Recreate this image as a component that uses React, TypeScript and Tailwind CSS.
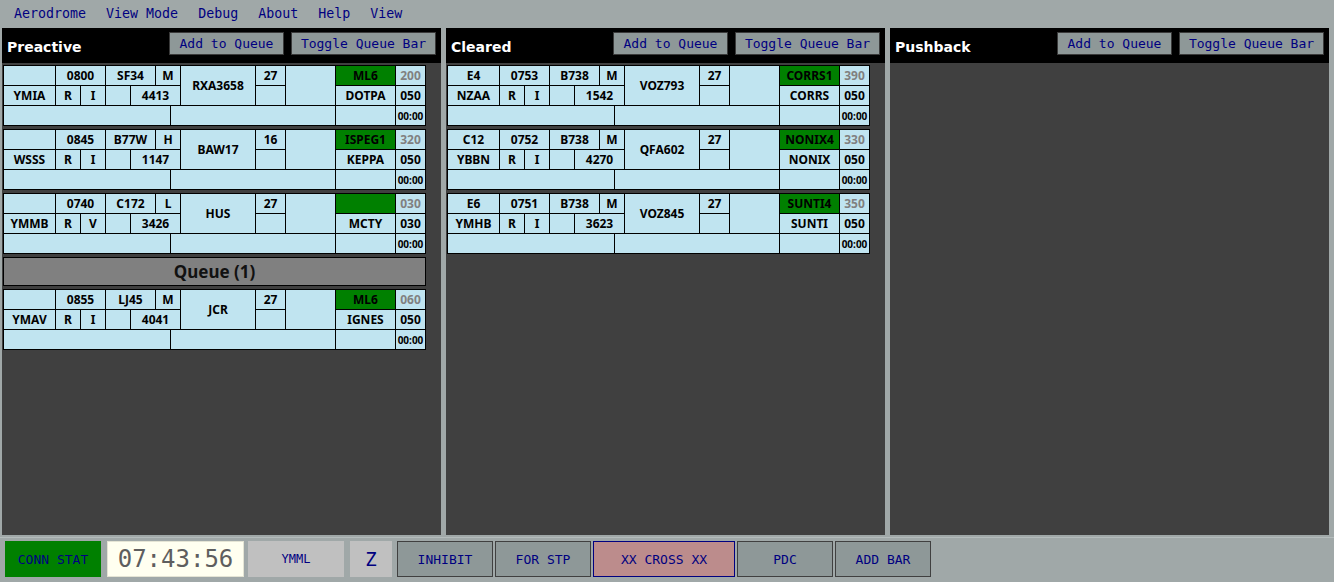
import React from "react";

type Strip = {
  bay: string;
  time: string;
  type: string;
  wtc: string;
  callsign: string;
  rwy: string;
  sid: string;
  level: string;
  dest: string;
  rules: string;
  kind: string;
  squawk: string;
  fix: string;
  cfl: string;
};

const PREACTIVE: Strip[] = [
  { bay: "", time: "0800", type: "SF34", wtc: "M", callsign: "RXA3658", rwy: "27", sid: "ML6", level: "200", dest: "YMIA", rules: "R", kind: "I", squawk: "4413", fix: "DOTPA", cfl: "050" },
  { bay: "", time: "0845", type: "B77W", wtc: "H", callsign: "BAW17", rwy: "16", sid: "ISPEG1", level: "320", dest: "WSSS", rules: "R", kind: "I", squawk: "1147", fix: "KEPPA", cfl: "050" },
  { bay: "", time: "0740", type: "C172", wtc: "L", callsign: "HUS", rwy: "27", sid: "", level: "030", dest: "YMMB", rules: "R", kind: "V", squawk: "3426", fix: "MCTY", cfl: "030" },
];

const QUEUE: Strip[] = [
  { bay: "", time: "0855", type: "LJ45", wtc: "M", callsign: "JCR", rwy: "27", sid: "ML6", level: "060", dest: "YMAV", rules: "R", kind: "I", squawk: "4041", fix: "IGNES", cfl: "050" },
];

const CLEARED: Strip[] = [
  { bay: "E4", time: "0753", type: "B738", wtc: "M", callsign: "VOZ793", rwy: "27", sid: "CORRS1", level: "390", dest: "NZAA", rules: "R", kind: "I", squawk: "1542", fix: "CORRS", cfl: "050" },
  { bay: "C12", time: "0752", type: "B738", wtc: "M", callsign: "QFA602", rwy: "27", sid: "NONIX4", level: "330", dest: "YBBN", rules: "R", kind: "I", squawk: "4270", fix: "NONIX", cfl: "050" },
  { bay: "E6", time: "0751", type: "B738", wtc: "M", callsign: "VOZ845", rwy: "27", sid: "SUNTI4", level: "350", dest: "YMHB", rules: "R", kind: "I", squawk: "3623", fix: "SUNTI", cfl: "050" },
];

const MONO = "font-['DejaVu_Sans_Mono',monospace]";

function Cell({
  children,
  className = "",
  bg = "bg-[#c0e4f0]",
  color = "text-black",
}: {
  children?: React.ReactNode;
  className?: string;
  bg?: string;
  color?: string;
}) {
  return (
    <div className={`flex items-center justify-center leading-none ${bg} ${color} ${className}`}>{children}</div>
  );
}

function StripCard({ s }: { s: Strip }) {
  return (
    <div className="grid w-[423px] shrink-0 grid-cols-[51px_24px_24px_24px_24px_14px_9px_74px_29px_49px_59px_29px] grid-rows-[19px_19px_19px] gap-px bg-black p-px font-['Noto_Sans',sans-serif] text-[12px] font-bold">
      <Cell>{s.bay}</Cell>
      <Cell className="col-span-2">{s.time}</Cell>
      <Cell className="col-span-2">{s.type}</Cell>
      <Cell className="col-span-2">{s.wtc}</Cell>
      <Cell className="row-span-2">{s.callsign}</Cell>
      <Cell>{s.rwy}</Cell>
      <Cell className="row-span-2" />
      <Cell bg="bg-[#008000]">{s.sid}</Cell>
      <Cell color="text-[#808080]">{s.level}</Cell>

      <Cell>{s.dest}</Cell>
      <Cell>{s.rules}</Cell>
      <Cell>{s.kind}</Cell>
      <Cell />
      <Cell className="col-span-3">{s.squawk}</Cell>
      <Cell />
      <Cell>{s.fix}</Cell>
      <Cell>{s.cfl}</Cell>

      <Cell className="col-span-6" />
      <Cell className="col-span-4" />
      <Cell />
      <Cell className="text-[10px]">00:00</Cell>
    </div>
  );
}

function HeaderButton({ children, width }: { children: React.ReactNode; width: string }) {
  return (
    <div
      className={`flex h-[23px] ${width} items-center justify-center border border-[#3a3a3a] bg-[#8e9898] ${MONO} text-[13px] leading-none text-[#000080]`}
    >
      {children}
    </div>
  );
}

function Column({ title, children }: { title: string; children?: React.ReactNode }) {
  return (
    <div className="flex w-[439px] shrink-0 flex-col">
      <div className="flex h-[35px] shrink-0 items-start bg-black pl-[5px] pr-[5px] pt-[4px]">
        <span className="mt-[8px] font-['DejaVu_Sans',sans-serif] text-[14px] font-bold leading-none text-white">
          {title}
        </span>
        <div className="ml-auto flex gap-[7px]">
          <HeaderButton width="w-[115px]">Add to Queue</HeaderButton>
          <HeaderButton width="w-[145px]">Toggle Queue Bar</HeaderButton>
        </div>
      </div>
      <div className="flex flex-1 flex-col gap-[3px] bg-[#404040] pl-px pt-[2px]">{children}</div>
    </div>
  );
}

function BarButton({
  children,
  className = "",
  color = "text-[#000080]",
  size = "text-[13px]",
}: {
  children: React.ReactNode;
  className?: string;
  color?: string;
  size?: string;
}) {
  return (
    <div className={`flex h-[36px] items-center justify-center ${MONO} leading-none ${size} ${color} ${className}`}>
      {children}
    </div>
  );
}

export default function App() {
  const menu = ["Aerodrome", "View Mode", "Debug", "About", "Help", "View"];

  return (
    <div className="flex h-[582px] w-[1334px] flex-col overflow-hidden bg-[#a0a8a8]">
      <nav className={`flex h-[28px] shrink-0 items-center pl-[4px] ${MONO} text-[13.3px] leading-none text-[#000080]`}>
        {menu.map((m) => (
          <span key={m} className="whitespace-pre px-[10px]">
            {m}
          </span>
        ))}
      </nav>

      <main className="flex h-[507px] shrink-0 gap-[5px] pl-[2px]">
        <Column title="Preactive">
          {PREACTIVE.map((s) => (
            <StripCard key={s.callsign} s={s} />
          ))}
          <div className="flex h-[29px] w-[423px] shrink-0 items-center justify-center border border-black bg-[#808080] font-['Noto_Sans',sans-serif] text-[17px] font-bold leading-none text-[#111]">
            Queue (1)
          </div>
          {QUEUE.map((s) => (
            <StripCard key={s.callsign} s={s} />
          ))}
        </Column>
        <Column title="Cleared">
          {CLEARED.map((s) => (
            <StripCard key={s.callsign} s={s} />
          ))}
        </Column>
        <Column title="Pushback" />
      </main>

      <footer className="mt-[2px] flex flex-1 items-start border-t border-[#b4bcbc] pl-[5px] pt-[3px]">
        <BarButton className="w-[96px] bg-[#008000]">CONN STAT</BarButton>
        <BarButton
          className="ml-[6px] w-[137px] border border-[#e4e4d4] bg-[#fffff0]"
          color="text-[#5e5e5e]"
          size="text-[24px]"
        >
          07:43:56
        </BarButton>
        <BarButton className="ml-[4px] w-[96px] bg-[#c0c0c0]" size="text-[12px]">
          YMML
        </BarButton>
        <BarButton className="ml-[6px] w-[42px] bg-[#c0c0c0]" size="text-[19px]">
          Z
        </BarButton>
        <BarButton className="ml-[5px] w-[96px] border border-[#404040] bg-[#8e9898]">INHIBIT</BarButton>
        <BarButton className="ml-[2px] w-[96px] border border-[#404040] bg-[#8e9898]">FOR STP</BarButton>
        <BarButton className="ml-[2px] w-[142px] border border-[#000080] bg-[#bc8c8c]">XX CROSS XX</BarButton>
        <BarButton className="ml-[2px] w-[96px] border border-[#404040] bg-[#8e9898]">PDC</BarButton>
        <BarButton className="ml-[2px] w-[96px] border border-[#404040] bg-[#8e9898]">ADD BAR</BarButton>
      </footer>
    </div>
  );
}
